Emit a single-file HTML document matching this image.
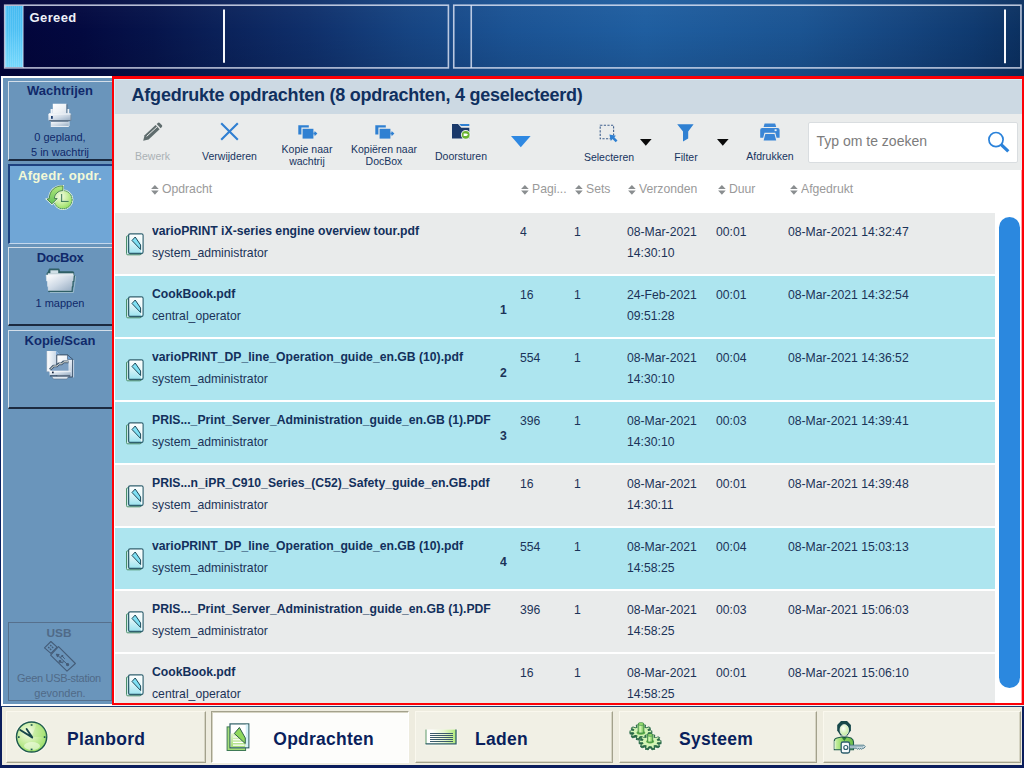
<!DOCTYPE html>
<html>
<head>
<meta charset="utf-8">
<style>
*{box-sizing:border-box;margin:0;padding:0}
html,body{width:1024px;height:768px;overflow:hidden}
body{position:relative;background:#02043a;font-family:"Liberation Sans",sans-serif;color:#0f2d5c}
.abs{position:absolute}
/* header */
#hdr{position:absolute;left:0;top:0;width:1024px;height:76px;background:linear-gradient(180deg,rgba(255,255,255,.03) 0%,rgba(0,0,0,0) 40%,rgba(0,0,20,.12) 100%),linear-gradient(90deg,#02043a 0%,#030940 8%,#06144b 15%,#0a2058 21%,#0f2f6a 30%,#164482 40%,#1b5394 50%,#1f5ea0 63%,#1b5492 78%,#15457f 88%,#0f3a70 95%,#0b3060 100%)}
#hdr .p{position:absolute;top:4px;height:65px;border:2px solid rgba(190,200,232,.78)}
#hdr .vd{position:absolute;top:10px;height:54px;width:2px;background:#f4f6fb}
#stripe{position:absolute;left:5px;top:6px;width:18px;height:61px;background:repeating-linear-gradient(90deg,rgba(255,255,255,.0) 0,rgba(255,255,255,0) 1px,rgba(255,255,255,.13) 1px,rgba(255,255,255,.13) 2px),linear-gradient(180deg,#45baf1 0%,#4cc0f4 40%,#74d8fc 100%)}
#gereed{position:absolute;left:29.5px;top:10px;font-weight:bold;font-size:13px;line-height:15px;color:#eef1f8;letter-spacing:.4px}
/* sidebar */
#side{position:absolute;left:1px;top:76px;width:111px;height:630px;background:#6a95bb;border-left:2px solid #fff;border-top:2px solid #fff;border-bottom:2px solid #fff}
.sb{position:absolute;left:5px;width:104px;height:80px;background:#6a95bb;border-top:1px solid #d3dee9;border-left:1px solid #d3dee9;border-bottom:2px solid #1b2a40;text-align:center;color:#10296a}
.sb.on{background:#70a6d6;border-top:2px solid #1d4180;border-left:2px solid #1d4180;border-bottom:1px solid #c4d8ee;color:#f3f9d6;height:80px}
.sb.dis{border:1px solid #56708d;color:#506a88;height:79px}
.sb .t{position:absolute;left:-2px;width:104px;font-weight:bold;font-size:13px;line-height:15px;white-space:nowrap}
.sb .s{position:absolute;left:-2px;width:104px;font-size:11px;line-height:13px;white-space:nowrap}
/* main */
#main{position:absolute;left:112px;top:76px;width:912px;box-shadow:inset -1px 0 0 rgba(253,0,6,.35);height:629px;background:#fff;border:2px solid #fd0006;border-top-width:3px;overflow:hidden}
#title{position:absolute;z-index:2;left:1px;top:2px;width:908px;height:35px;background:#ccd9e3;border-top:1px solid #d6eef6;border-left:1px solid #d6eef6}
#title span{position:absolute;left:16.6px;top:4.5px;font-size:18px;line-height:21px;font-weight:bold;color:#10305f;white-space:nowrap;letter-spacing:-.235px}
#tb{position:absolute;left:0;top:36px;width:910px;height:57px;background:#eaecec}
.tbl{position:absolute;font-size:10.5px;color:#17345f;text-align:center;line-height:12.5px;white-space:nowrap;transform:translateX(-50%)}
.ch{position:absolute;top:105px;font-size:13px;line-height:14px;color:#9a9a9a;white-space:nowrap;transform:scaleX(.938);transform-origin:0 50%}
.row{position:absolute;left:2px;width:880px;height:61px;background:#e9ebeb}
.row.sel{background:#ade5ef}
.row div{position:absolute;white-space:nowrap;font-size:13px;line-height:14px;color:#1b3358;transform:scaleX(.938);transform-origin:0 50%}
.row .n{left:37px;top:10.6px;font-weight:bold;color:#13305c}
.row .u{left:37px;top:32.7px}
.row .c1{margin-top:.5px;left:405px;top:11px}
.row .c2{margin-top:.5px;left:459px;top:11px}
.row .c3{margin-top:.5px;left:512px;top:11px}
.row .c3b{left:512px;top:32.7px}
.row .c4{margin-top:.5px;left:601px;top:11px}
.row .c5{margin-top:.5px;left:673px;top:11px}
.row .k{left:385px;top:27.4px;font-weight:bold}
.di{position:absolute;left:11px;top:20px;width:18px;height:23px}
#mi{position:absolute;left:-1px;top:-2px;width:910px;height:628px}
.sb>*{margin-left:1px}
.sb.on>*,.sb.dis>*{margin-left:0}
.sh>*{margin-top:.9px}
#tb>*{margin-top:.7px}
.ch,#mi>svg.hs{margin-top:0}
/* bottom */
#bot{position:absolute;left:0;top:706px;width:1024px;height:62px;background:#eeecdf;border-left:2px solid #0a1d5c;border-right:2px solid #0a1d5c;border-bottom:3px solid #0a1d5c;border-top:1px solid #1e3d70}
.bb{position:absolute;top:4px;height:52px;background:#f1f0e5;border-top:1px solid #faf8ee;border-left:1px solid #faf8ee;border-right:1px solid #a3a18c;border-bottom:1px solid #a3a18c;box-shadow:inset -1px -1px 0 #d6d4c3}
.bb.on{background:#fdfdfb;border-top:1px solid #a3a18c;border-left:1px solid #a3a18c;border-right:1px solid #fff;border-bottom:1px solid #fff;box-shadow:inset 1px 1px 0 #d6d4c3}
.bb span{position:absolute;top:16.5px;margin-left:-1px;letter-spacing:.3px;font-size:17.5px;line-height:21px;font-weight:bold;color:#0a1f5c;white-space:nowrap}
</style>
</head>
<body>
<div id="hdr">
  <div id="stripe"></div>
  <svg class="abs" style="left:0;top:0" width="1024" height="76" viewBox="0 0 1024 76"><g fill="none" stroke="#e3e9f8" stroke-opacity=".8" stroke-width="1.6"><rect x="4.7" y="5.2" width="443.7" height="62.7"/><rect x="453.75" y="5.2" width="567.2" height="62.7"/><path d="M471.25 5.2 V67.9"/><path d="M23.2 5.2 V67.9" stroke-opacity=".45"/></g><path d="M224 9.6 V62.8 M1005 9.6 V63.2" stroke="#f6f8fc" stroke-width="2" fill="none"/></svg>
  <div id="gereed">Gereed</div>
</div>
<div class="abs" style="left:0;top:76px;width:1px;height:630px;background:#0b2262"></div>
<div id="side">
  <div class="sb" style="top:3px;height:79.5px">
    <div class="t" style="top:1.4px">Wachtrijen</div>
    <svg class="abs hs" style="left:38px;top:21px" width="25" height="25" viewBox="0 0 25 25"><use href="#prn"/></svg>
    <div class="s" style="top:49px">0 gepland,</div>
    <div class="s" style="top:63.5px">5 in wachtrij</div>
  </div>
  <div class="sb on" style="top:85.5px">
    <div class="t" style="top:2px;font-size:13.2px;letter-spacing:.2px">Afgedr. opdr.</div>
    <svg class="abs hs" style="left:30px;top:14.5px" width="44" height="36" viewBox="0 0 44 36"><use href="#hist"/></svg>
  </div>
  <div class="sb sh" style="top:168.7px;height:79.8px">
    <div class="t" style="top:1px;letter-spacing:-.45px">DocBox</div>
    <svg class="abs hs" style="left:34.5px;top:19.0px" width="32" height="26" viewBox="0 0 32 26"><use href="#fold"/></svg>
    <div class="s" style="top:48.5px">1 mappen</div>
  </div>
  <div class="sb sh" style="top:251.7px;height:79px">
    <div class="t" style="top:1.3px">Kopie/Scan</div>
    <svg class="abs hs" style="left:36px;top:18.0px" width="29" height="30" viewBox="0 0 29 30"><use href="#scan"/></svg>
  </div>
  <div class="sb dis" style="top:544px">
    <div class="t" style="top:2.6px;left:-2px;font-size:11.8px">USB</div>
    <svg class="abs hs" style="left:34.5px;top:17.5px" width="32" height="31" viewBox="0 0 32 31"><use href="#usb"/></svg>
    <div class="s" style="top:49px;left:-2px;letter-spacing:-.3px">Geen USB-station</div>
    <div class="s" style="top:64px;left:-1px">gevonden.</div>
  </div>
</div>
<div id="main"><div id="mi">
  <svg width="0" height="0" style="position:absolute"><defs>
<g id="copy"><path d="M0.3 0.3 H10.8 V2.6 H3.4 V9.6 H0.3 Z" fill="#2f80d2"/><rect x="4.6" y="3.8" width="10.8" height="9.8" fill="#2f80d2"/><path d="M15.4 7.6 H16.6 V5.9 L19.4 8.6 L16.6 11.3 V9.6 H15.4 Z" fill="#2f80d2"/></g>
<linearGradient id="gD" x1="0" y1="0" x2="0" y2="1"><stop offset="0" stop-color="#ffffff"/><stop offset=".35" stop-color="#e6f7f9"/><stop offset="1" stop-color="#9be3f0"/></linearGradient>
<g id="doc"><rect x="0.5" y="2.8" width="14.6" height="19" rx="1.2" fill="#cfeaee" stroke="#4a8f6a" stroke-width="1"/><rect x="2.6" y="0.8" width="14.4" height="19.7" rx="1.5" fill="url(#gD)" stroke="#2f5f6e" stroke-width="1.3"/><rect x="14.7" y="1.8" width="1.6" height="17.6" fill="#f6fcfc"/><path d="M9.2 4 L6 7.5 L14.6 16.5 L14.6 12 Z" fill="#7fe0f4" stroke="#1f4a5a" stroke-width="1" stroke-linejoin="round"/></g>

<linearGradient id="gW" x1="0" y1="0" x2="1" y2="1"><stop offset="0" stop-color="#ffffff"/><stop offset=".55" stop-color="#e6edf5"/><stop offset="1" stop-color="#a9bdd3"/></linearGradient>
<linearGradient id="gH" x1="0" y1="0" x2="1" y2="0"><stop offset="0" stop-color="#ffffff"/><stop offset=".5" stop-color="#dbe5ef"/><stop offset="1" stop-color="#b4c6da"/></linearGradient>
<radialGradient id="gG" cx=".38" cy=".32" r=".75"><stop offset="0" stop-color="#f4fde4"/><stop offset=".5" stop-color="#c9efa0"/><stop offset="1" stop-color="#8fdc58"/></radialGradient>
<linearGradient id="gA" x1="0" y1="0" x2="0" y2="1"><stop offset="0" stop-color="#b6ea7c"/><stop offset="1" stop-color="#62c25a"/></linearGradient>
<linearGradient id="gP" x1="0" y1="0" x2="1" y2="1"><stop offset="0" stop-color="#ffffff"/><stop offset=".6" stop-color="#eef2f6"/><stop offset="1" stop-color="#dbe3ec"/></linearGradient><linearGradient id="gB" x1="0" y1="0" x2="1" y2="1"><stop offset="0" stop-color="#ffffff"/><stop offset=".5" stop-color="#cfdae6"/><stop offset="1" stop-color="#93a9c0"/></linearGradient><g id="prn"><rect x="4.8" y="0.75" width="13.7" height="9.8" fill="url(#gP)"/><rect x="18.5" y="1.3" width="1" height="9.2" fill="#566c82"/><rect x="2.6" y="6" width="2.2" height="4.6" fill="#eef2f7"/><rect x="19.5" y="6" width="1.7" height="4.6" fill="#eef2f7"/><rect x="0.4" y="10.4" width="22.7" height="7.4" rx="1.1" fill="url(#gB)"/><path d="M1 10.9 H22.4" stroke="#fff" stroke-width=".9"/><path d="M1.2 17.5 H22.6" stroke="#5f7389" stroke-width="1"/><path d="M22.9 11.6 V17.6" stroke="#6b8096" stroke-width=".8"/><rect x="3" y="13" width="1.8" height="2.8" fill="#1f3f70"/><path d="M2.8 18.2 H20.8 V23.2 H2.8 Z" fill="url(#gB)"/><path d="M2.8 18.5 H20.8" stroke="#6b7f95" stroke-width=".9"/><path d="M2.8 23.4 H20.8" stroke="#f4f7fa" stroke-width="1"/><path d="M21.1 18.4 V23" stroke="#e6edf4" stroke-width=".8"/></g>
<g id="hist"><circle cx="23" cy="19.7" r="9.9" fill="none" stroke="#e9f6de" stroke-width="1"/><circle cx="23" cy="19.7" r="9.1" fill="url(#gG)" stroke="#3f8148" stroke-width=".9" stroke-dasharray="1.3 .7"/><path d="M21.6 14 V21.3 H28.6" stroke="#3f7a58" stroke-width="1.3" fill="none"/><path d="M22.2 14 V20.6 H28.6" stroke="#e8f8d4" stroke-width=".6" fill="none" opacity=".8"/><path d="M23 5.9 C15 5.6 9.6 10.5 9.2 18.6 L7 19.2 L12 23.8 L17.2 18.6 L14.4 18.4 C14.8 14 18 10.8 22.8 10.6 Z" fill="#eaf7e0" stroke="#eaf7e0" stroke-width="2"/><path d="M23 5.9 C15 5.6 9.6 10.5 9.2 18.6 L7 19.2 L12 23.8 L17.2 18.6 L14.4 18.4 C14.8 14 18 10.8 22.8 10.6 Z" fill="url(#gA)" stroke="#2f6b3a" stroke-width=".8"/></g>
<g id="fold"><path d="M4.6 0.6 H13.6 Q14.4 0.6 14.6 1.4 L15 3.2 H27.6 Q29.2 3.2 29.2 4.8 V8 H1.6 V5.4 Q1.6 4.6 2.6 4.2 L3.8 1.2 Q4 0.6 4.6 0.6Z" fill="#2f5f66"/><rect x="5.4" y="2.3" width="7.8" height="3.2" fill="#cfdfe6"/><rect x="2.8" y="5.3" width="25.6" height="2.2" fill="#dfe8ee"/><path d="M1.2 7.1 H28.9 L28.4 13 L27.6 13.2 L27.4 18.4 L26.8 18.6 L26.6 22.8 H3.4 L3.2 18.6 L2.6 18.4 L2.4 13.2 L1.6 13 Z" fill="url(#gB)" stroke="#e9f0f4" stroke-width=".5"/><path d="M29.4 7.4 L28.9 13.3 L28.1 13.5 L27.9 18.7 L27.3 18.9 L27.1 23.4 H3.2" fill="none" stroke="#2f5f66" stroke-width="1.3"/><path d="M30.5 8 L30 13.8 L29.2 19.4 L28.4 24.5 H5" fill="none" stroke="#bcd6d4" stroke-width=".7" opacity=".8"/></g>
<g id="scan"><path d="M0.7 1 H10 L14 4.8 V21.8 H0.7 Z" fill="url(#gH)"/><path d="M10 1 L14 4.8 H10 Z" fill="#7fa9d6"/><path d="M0.7 1 V21.8 H4" stroke="#7f96ae" stroke-width=".6" fill="none"/><path d="M10.75 4.9 H21.5 L26.7 9.4 V27 H10.75 Z" fill="url(#gW)" stroke="#3a4f66" stroke-width="1"/><path d="M21.5 4.9 L26.7 9.4 H21.5 Z" fill="#6fa3d8" stroke="#3a4f66" stroke-width=".6"/><path d="M27.6 10 V27.4" stroke="#dfe9f2" stroke-width=".8"/><path d="M4 21 L7.6 17 H10.6 L12.8 14.8 H15.6 L17.6 12.8 H22.5 V21 Z" fill="#7d9fc2"/><path d="M4 19.6 L7.6 16 H10.6 L12.8 13.8 H15.6 L17.6 11.8 H22.5" stroke="#3f566e" stroke-width="2.7" fill="none" stroke-linejoin="round"/><path d="M4.4 19.2 L7.8 16 H10.8 L13 13.8 H15.8 L17.8 11.8 H22" stroke="#e9e8dd" stroke-width="1" fill="none"/><rect x="3.5" y="20.9" width="21.3" height="4.5" fill="url(#gB)"/><path d="M3.5 21.2 H24.8" stroke="#fff" stroke-width=".7"/><rect x="6" y="21.6" width="1.7" height="1.7" fill="#14223c"/><path d="M4 25.9 H24.2" stroke="#2f4258" stroke-width="1.1"/><path d="M5.6 26.5 H22.5 L21 29 H7.4 Z" fill="#dfe7ef" stroke="#5a6f86" stroke-width=".6"/></g>
<g id="usb" fill="none" stroke="#445c78" stroke-width="1.1" stroke-linejoin="round"><path d="M6.9 0.5 L0.5 6.9 L6.9 12.3 L13.1 6.1 Z"/><path d="M6.2 4 L7.4 5.2 M8 5.8 L9.2 7 M4.2 6 L5.4 7.2 M6 7.8 L7.2 9" stroke-width="1.3"/><path d="M14.5 5.6 L6.6 14.1 L23 30.1 L31.4 22.5 Z"/><path d="M13.8 14.4 L23.5 23.5 M16 16.4 L18.4 15.4 L20.8 17.8 M19.4 19.8 L18.6 22 L16 20.6" stroke-width="1"/><path d="M12.4 13.2 L15 13.6 L13.4 15.6 Z" fill="#445c78"/><circle cx="23.6" cy="23.6" r="1.1" fill="#445c78"/><circle cx="16" cy="20.4" r=".9" fill="#445c78"/><rect x="17.4" y="14" width="1.8" height="1.8" fill="#445c78" stroke="none"/></g>
<radialGradient id="gC" cx=".4" cy=".35" r=".8"><stop offset="0" stop-color="#f6fdea"/><stop offset=".45" stop-color="#c7eda0"/><stop offset="1" stop-color="#86d850"/></radialGradient>
<g id="clock"><circle cx="16.6" cy="17" r="16.2" fill="none" stroke="#fbf9ef" stroke-width="1.2"/><circle cx="16.6" cy="17" r="15.1" fill="url(#gC)" stroke="#1f5a50" stroke-width="1.5"/><path d="M16.6 17 L31.6 17 A15 15 0 0 0 22 3 Z" fill="#9be068" opacity=".32"/><ellipse cx="17" cy="26" rx="8" ry="4" fill="#f4fde8" opacity=".6"/><path d="M5.2 10 L17.2 17.4 M11.6 9 L17.2 17.4" stroke="#17474a" stroke-width="1.9" stroke-linecap="round" fill="none"/><g fill="#1f5a50"><rect x="15.7" y="4.2" width="1.8" height="1.6"/><rect x="15.7" y="28.6" width="1.8" height="1.6"/><rect x="3" y="16.2" width="1.6" height="1.8"/><rect x="28.8" y="16.2" width="1.6" height="1.8"/></g></g><linearGradient id="gJ" x1="0" y1="0" x2="1" y2="1"><stop offset="0" stop-color="#a6dd85"/><stop offset="1" stop-color="#7cc660"/></linearGradient>
<linearGradient id="gJ2" x1="0" y1="0" x2="0" y2="1"><stop offset="0" stop-color="#e2f6cc"/><stop offset="1" stop-color="#a4dc76"/></linearGradient><g id="jobs"><rect x="1.1" y="3.9" width="18.5" height="23.6" fill="#a5dd78" stroke="#3f7a55" stroke-width="1"/><rect x="4" y="0.9" width="18.8" height="23.9" fill="#fff" stroke="#2f5f66" stroke-width="1.2"/><rect x="19.7" y="1.6" width="2.5" height="22.5" fill="#d4f0f8"/><path d="M4.7 10.5 H8.3 L19.3 20.6 V24.1 H4.7 Z" fill="url(#gJ2)"/><path d="M7 14 H12 M7 16.7 H15 M7 19.4 H17.6 M7 22.1 H18.6" stroke="#fff" stroke-width="1.1"/><path d="M13.4 4.5 L8.3 10.5 L19.3 20.6 L19.3 15 Z" fill="#8fd85c" stroke="#2f5f4a" stroke-width="1" stroke-linejoin="round"/></g>
<linearGradient id="gT" x1="0" y1="0" x2="1" y2="0"><stop offset="0" stop-color="#ffffff"/><stop offset=".2" stop-color="#ffffff"/><stop offset=".6" stop-color="#e4f6cf"/><stop offset="1" stop-color="#b0ea78"/></linearGradient><g id="tray"><rect x="-0.2" y="-0.2" width="32.4" height="16.2" fill="none" stroke="#fbf9ef" stroke-width="1"/><rect x="1" y="0.6" width="30" height="14" fill="url(#gT)"/><path d="M1 0.5 V15" stroke="#5f9a6a" stroke-width="1"/><path d="M0.6 14.8 H31 V0.5" fill="none" stroke="#2f5f6a" stroke-width="1.3"/><path d="M4.6 4 H27.5 M4.6 6 H27.5 M4.6 8 H27.5 M4.6 10 H27.5 M4.6 12 H27.5" stroke="#3a5a6c" stroke-width="1" shape-rendering="crispEdges"/></g>
<g id="gear1"><path d="M8.9 -1.1 L8.9 1.1 L6.3 1.3 L5.8 2.6 L7.9 4.4 L6.6 6.1 L4.3 4.8 L3.2 5.5 L3.8 8.2 L1.7 8.8 L0.7 6.4 L-0.7 6.4 L-1.7 8.8 L-3.8 8.2 L-3.2 5.5 L-4.3 4.8 L-6.6 6.1 L-7.9 4.4 L-5.8 2.6 L-6.3 1.3 L-8.9 1.1 L-8.9 -1.1 L-6.3 -1.3 L-5.8 -2.6 L-7.9 -4.4 L-6.6 -6.1 L-4.3 -4.8 L-3.2 -5.5 L-3.8 -8.2 L-1.7 -8.8 L-0.7 -6.4 L0.7 -6.4 L1.7 -8.8 L3.8 -8.2 L3.2 -5.5 L4.3 -4.8 L6.6 -6.1 L7.9 -4.4 L5.8 -2.6 L6.3 -1.3 Z" fill="#d4f4b6" stroke="#2a6a48" stroke-width=".9" stroke-linejoin="round"/></g><g id="gear1d"><path d="M8.9 -1.1 L8.9 1.1 L6.3 1.3 L5.8 2.6 L7.9 4.4 L6.6 6.1 L4.3 4.8 L3.2 5.5 L3.8 8.2 L1.7 8.8 L0.7 6.4 L-0.7 6.4 L-1.7 8.8 L-3.8 8.2 L-3.2 5.5 L-4.3 4.8 L-6.6 6.1 L-7.9 4.4 L-5.8 2.6 L-6.3 1.3 L-8.9 1.1 L-8.9 -1.1 L-6.3 -1.3 L-5.8 -2.6 L-7.9 -4.4 L-6.6 -6.1 L-4.3 -4.8 L-3.2 -5.5 L-3.8 -8.2 L-1.7 -8.8 L-0.7 -6.4 L0.7 -6.4 L1.7 -8.8 L3.8 -8.2 L3.2 -5.5 L4.3 -4.8 L6.6 -6.1 L7.9 -4.4 L5.8 -2.6 L6.3 -1.3 Z" fill="#2a6a48" stroke="#2a6a48" stroke-width=".9" stroke-linejoin="round"/></g><g id="gear1g"><path d="M8.9 -1.1 L8.9 1.1 L6.3 1.3 L5.8 2.6 L7.9 4.4 L6.6 6.1 L4.3 4.8 L3.2 5.5 L3.8 8.2 L1.7 8.8 L0.7 6.4 L-0.7 6.4 L-1.7 8.8 L-3.8 8.2 L-3.2 5.5 L-4.3 4.8 L-6.6 6.1 L-7.9 4.4 L-5.8 2.6 L-6.3 1.3 L-8.9 1.1 L-8.9 -1.1 L-6.3 -1.3 L-5.8 -2.6 L-7.9 -4.4 L-6.6 -6.1 L-4.3 -4.8 L-3.2 -5.5 L-3.8 -8.2 L-1.7 -8.8 L-0.7 -6.4 L0.7 -6.4 L1.7 -8.8 L3.8 -8.2 L3.2 -5.5 L4.3 -4.8 L6.6 -6.1 L7.9 -4.4 L5.8 -2.6 L6.3 -1.3 Z" fill="none" stroke="#fbfaf0" stroke-width="2.6" stroke-linejoin="round"/></g>
<linearGradient id="gCy" x1="0" y1="0" x2="1" y2="0"><stop offset="0" stop-color="#7ccc58"/><stop offset=".35" stop-color="#d8f7b8"/><stop offset="1" stop-color="#6cc04c"/></linearGradient><g id="gears"><g transform="translate(11.9 11.2) scale(1.22 .78)"><use href="#gear1g"/></g><g transform="translate(21.1 21.1) scale(1.22 .78)"><use href="#gear1g"/></g><g transform="translate(11.9 11.2) scale(1.22 .78)"><use href="#gear1d"/></g><g transform="translate(11.9 9.6) scale(1.22 .78)"><use href="#gear1"/></g><ellipse cx="11.9" cy="10.8" rx="4.4" ry="1.9" fill="#5fb04a"/><rect x="9.1" y="1.6" width="5.8" height="9.4" rx="1" fill="url(#gCy)" stroke="#2f7a44" stroke-width=".7"/><ellipse cx="12" cy="2" rx="2.9" ry="1.4" fill="#9ee070" stroke="#2f7a44" stroke-width=".6"/><g transform="translate(21.1 21.1) scale(1.22 .78)"><use href="#gear1d"/></g><g transform="translate(21.1 19.5) scale(1.22 .78)"><use href="#gear1"/></g><ellipse cx="21.1" cy="19.6" rx="4" ry="1.8" fill="#5fb04a"/><rect x="18.5" y="12.6" width="5.2" height="7.4" rx="1" fill="url(#gCy)" stroke="#2f7a44" stroke-width=".7"/><ellipse cx="21.1" cy="13" rx="2.6" ry="1.3" fill="#9ee070" stroke="#2f7a44" stroke-width=".6"/></g><linearGradient id="gU" x1="0" y1="0" x2="1" y2="0"><stop offset="0" stop-color="#b6e39a"/><stop offset="1" stop-color="#6fbf58"/></linearGradient>
<radialGradient id="gF" cx=".4" cy=".35" r=".7"><stop offset="0" stop-color="#ffffff"/><stop offset="1" stop-color="#bdeb94"/></radialGradient><linearGradient id="gU2" x1="0" y1="0" x2="1" y2="0"><stop offset="0" stop-color="#d2f3b4"/><stop offset=".4" stop-color="#93da62"/><stop offset="1" stop-color="#6cbc4a"/></linearGradient><g id="user"><path d="M1.3 29.8 V21 Q1.3 18.6 4 18 L8.5 17 H14 L18 18 Q20.5 19.4 20.5 22 V29.8 Z" fill="url(#gU2)" stroke="#1f5a4a" stroke-width="1.1"/><path d="M1.9 29 V21" stroke="#f2fbea" stroke-width=".9"/><path d="M8.4 17 L11.3 21 L14.2 17 Z" fill="#2f7a3a"/><path d="M8 0.9 H14 L17.9 5 V10.5 L14.5 15.4 H7.5 L4.2 10.5 V5 Z" fill="#17484a"/><ellipse cx="11.3" cy="10" rx="4.3" ry="5.5" fill="url(#gF)" stroke="#f4fbf0" stroke-width=".7"/><path d="M8 16.6 L11.3 18 L14.6 16.6 L11.3 17 Z" fill="#17484a"/><rect x="8.2" y="22" width="8.4" height="11" rx="1.8" fill="#f6f9fb" stroke="#2f5f6e" stroke-width="1.3"/><circle cx="12.8" cy="27.5" r="2" fill="#fff" stroke="#2f5f6e" stroke-width="1.2"/><path d="M16.6 25.2 H31 L32.2 26.6 L31 28.2 H29.5 L28.6 29.4 L27.6 28.2 L26.6 29.4 L25.6 28.2 L24.6 29.4 L23.6 28.2 H16.6 Z" fill="#eef4f7" stroke="#3f6f80" stroke-width=".9"/><path d="M17.2 26.8 H30.4" stroke="#5f8a98" stroke-width=".8"/></g>
</defs></svg>
  <div id="title"><span>Afgedrukte opdrachten (8 opdrachten, 4 geselecteerd)</span></div>
  <div id="tb">
    <!-- pencil -->
    <svg class="abs hs" style="left:29px;top:8px" width="21" height="20" viewBox="0 0 21 20"><g fill="#5f6c6d"><path d="M1.2 18.8 L2.6 13.2 L13.6 3.1 L17.6 7.3 L6.6 17.4 Z"/><path d="M14.7 2.1 L16.2 0.8 Q17 0.2 17.8 1 L20 3.3 Q20.6 4.1 19.9 4.9 L18.6 6.2 Z"/></g><path d="M4.6 14.4 L15 4.9" stroke="#eaecec" stroke-width="1" fill="none"/></svg>
    <div class="tbl" style="left:39.5px;top:36.5px;color:#aab1b5">Bewerk</div>
    <!-- X -->
    <svg class="abs hs" style="left:107px;top:8.5px" width="19" height="19" viewBox="0 0 19 19"><path d="M1.2 1.2 L17.8 17.8 M17.8 1.2 L1.2 17.8" stroke="#2f7fd2" stroke-width="2.1" fill="none"/></svg>
    <div class="tbl" style="left:116.5px;top:36.5px">Verwijderen</div>
    <!-- copy 1 -->
    <svg class="abs hs" style="left:184.5px;top:11.5px" width="20" height="14" viewBox="0 0 20 14"><use href="#copy"/></svg>
    <div class="tbl" style="left:194px;top:29px">Kopie naar<br>wachtrij</div>
    <!-- copy 2 -->
    <svg class="abs hs" style="left:261.5px;top:11.5px" width="20" height="14" viewBox="0 0 20 14"><use href="#copy"/></svg>
    <div class="tbl" style="left:271px;top:29px">Kopiëren naar<br>DocBox</div>
    <!-- forward -->
    <svg class="abs hs" style="left:339px;top:10.5px" width="20" height="17" viewBox="0 0 20 17"><path d="M0 0.1 H6 L9.3 3.8 H17.3 V14.6 H0 Z" fill="#1a396a"/><path d="M7.2 0 H17.3 V2.1 H9 Z" fill="#2f80d2"/><circle cx="13.7" cy="10.8" r="4.8" fill="#f2f5f5"/><circle cx="13.7" cy="10.8" r="3.9" fill="#6ab432"/><path d="M11.6 9.5 H14.3 L16.2 10.8 L14.3 12.1 H11.6 Z" fill="#fff"/></svg>
    <div class="tbl" style="left:348px;top:36.8px">Doorsturen</div>
    <!-- blue tri -->
    <svg class="abs hs" style="left:398px;top:22.5px" width="20" height="12" viewBox="0 0 20 12"><path d="M0 0 H19.6 L9.8 11.2 Z" fill="#2e88e2"/></svg>
    <!-- select -->
    <svg class="abs hs" style="left:486px;top:10px" width="20" height="19" viewBox="0 0 20 19"><rect x="1.2" y="1.2" width="13.4" height="13.6" fill="none" stroke="#40608e" stroke-width="1.1" stroke-dasharray="2.2 1.4"/><path d="M10.4 10.4 L17 11.7 L15.3 13.3 L18.5 16.5 L16.7 18.3 L13.5 15.1 L11.8 16.9 Z" fill="#2f80d2"/></svg>
    <div class="tbl" style="left:496px;top:37.5px">Selecteren</div>
    <svg class="abs hs" style="left:527.3px;top:25.2px" width="12" height="8" viewBox="0 0 12 8"><path d="M0 0 H11.6 L5.8 6.8 Z" fill="#0a0a0a"/></svg>
    <!-- filter -->
    <svg class="abs hs" style="left:564px;top:10px" width="17" height="18" viewBox="0 0 17 18"><path d="M0.2 0.2 H16.6 L11.2 7.4 V14.4 L6 17.6 V7.4 Z" fill="#2f80d2"/></svg>
    <div class="tbl" style="left:573px;top:37.5px">Filter</div>
    <svg class="abs hs" style="left:604px;top:25.2px" width="12" height="8" viewBox="0 0 12 8"><path d="M0 0 H11.6 L5.8 6.8 Z" fill="#0a0a0a"/></svg>
    <!-- print -->
    <svg class="abs hs" style="left:647px;top:9px" width="20" height="18" viewBox="0 0 20 18"><g fill="#3a86d6"><path d="M4.6 0.4 H15.2 L16.2 4 H3.6 Z"/><path d="M2.2 4.9 H17.6 Q19.6 4.9 19.6 7 V14.8 H16.6 L15.3 9.8 H4.5 L3.2 14.8 H0.2 V7 Q0.2 4.9 2.2 4.9 Z"/><path d="M5.3 10.9 H14.5 L16.2 17.6 H3.6 Z"/></g><rect x="14.6" y="6.3" width="2" height="1.8" fill="#eaf2fb"/></svg>
    <div class="tbl" style="left:657px;top:36.5px">Afdrukken</div>
    <!-- search -->
    <div class="abs" style="left:695px;top:8px;width:210px;height:41px;background:#fff;border:1px solid #d9dde0;border-radius:2px"></div>
    <div class="abs" style="left:703.5px;top:19.5px;font-size:14px;color:#7c7c7c;white-space:nowrap">Typ om te zoeken</div>
    <svg class="abs hs" style="left:874px;top:17.5px" width="24" height="24" viewBox="0 0 24 24"><circle cx="9" cy="8.6" r="7.1" fill="none" stroke="#2a82da" stroke-width="1.7"/><path d="M14.2 13.6 L21.3 20.4" stroke="#2a82da" stroke-width="3.2" fill="none"/></svg>
  </div>

  <svg class="abs hs" style="left:38px;top:107.5px" width="8" height="10" viewBox="0 0 8 10" overflow="visible"><path d="M0.1 4.1 L3.9 -0.1 L7.7 4.1 Z M0.1 5.5 H7.7 L3.9 9.7 Z" fill="#8a8e90"/></svg><div class="ch" style="left:49px">Opdracht</div>
  <svg class="abs hs" style="left:408px;top:107.5px" width="8" height="10" viewBox="0 0 8 10" overflow="visible"><path d="M0.1 4.1 L3.9 -0.1 L7.7 4.1 Z M0.1 5.5 H7.7 L3.9 9.7 Z" fill="#8a8e90"/></svg><div class="ch" style="left:419px">Pagi...</div>
  <svg class="abs hs" style="left:462px;top:107.5px" width="8" height="10" viewBox="0 0 8 10" overflow="visible"><path d="M0.1 4.1 L3.9 -0.1 L7.7 4.1 Z M0.1 5.5 H7.7 L3.9 9.7 Z" fill="#8a8e90"/></svg><div class="ch" style="left:473px">Sets</div>
  <svg class="abs hs" style="left:515px;top:107.5px" width="8" height="10" viewBox="0 0 8 10" overflow="visible"><path d="M0.1 4.1 L3.9 -0.1 L7.7 4.1 Z M0.1 5.5 H7.7 L3.9 9.7 Z" fill="#8a8e90"/></svg><div class="ch" style="left:526px">Verzonden</div>
  <svg class="abs hs" style="left:605px;top:107.5px" width="8" height="10" viewBox="0 0 8 10" overflow="visible"><path d="M0.1 4.1 L3.9 -0.1 L7.7 4.1 Z M0.1 5.5 H7.7 L3.9 9.7 Z" fill="#8a8e90"/></svg><div class="ch" style="left:616px">Duur</div>
  <svg class="abs hs" style="left:677px;top:107.5px" width="8" height="10" viewBox="0 0 8 10" overflow="visible"><path d="M0.1 4.1 L3.9 -0.1 L7.7 4.1 Z M0.1 5.5 H7.7 L3.9 9.7 Z" fill="#8a8e90"/></svg><div class="ch" style="left:688px">Afgedrukt</div>
<div class="row" style="top:136px"><svg class="di" viewBox="0 0 18 23"><use href="#doc"/></svg><div class="n">varioPRINT iX-series engine overview tour.pdf</div><div class="u">system_administrator</div><div class="c1">4</div><div class="c2">1</div><div class="c3">08-Mar-2021</div><div class="c3b">14:30:10</div><div class="c4">00:01</div><div class="c5">08-Mar-2021 14:32:47</div></div>
<div class="row sel" style="top:199px"><svg class="di" viewBox="0 0 18 23"><use href="#doc"/></svg><div class="n">CookBook.pdf</div><div class="u">central_operator</div><div class="k">1</div><div class="c1">16</div><div class="c2">1</div><div class="c3">24-Feb-2021</div><div class="c3b">09:51:28</div><div class="c4">00:01</div><div class="c5">08-Mar-2021 14:32:54</div></div>
<div class="row sel" style="top:262px"><svg class="di" viewBox="0 0 18 23"><use href="#doc"/></svg><div class="n">varioPRINT_DP_line_Operation_guide_en.GB (10).pdf</div><div class="u">system_administrator</div><div class="k">2</div><div class="c1">554</div><div class="c2">1</div><div class="c3">08-Mar-2021</div><div class="c3b">14:30:10</div><div class="c4">00:04</div><div class="c5">08-Mar-2021 14:36:52</div></div>
<div class="row sel" style="top:325px"><svg class="di" viewBox="0 0 18 23"><use href="#doc"/></svg><div class="n">PRIS..._Print_Server_Administration_guide_en.GB (1).PDF</div><div class="u">system_administrator</div><div class="k">3</div><div class="c1">396</div><div class="c2">1</div><div class="c3">08-Mar-2021</div><div class="c3b">14:30:10</div><div class="c4">00:03</div><div class="c5">08-Mar-2021 14:39:41</div></div>
<div class="row" style="top:388px"><svg class="di" viewBox="0 0 18 23"><use href="#doc"/></svg><div class="n">PRIS...n_iPR_C910_Series_(C52)_Safety_guide_en.GB.pdf</div><div class="u">system_administrator</div><div class="c1">16</div><div class="c2">1</div><div class="c3">08-Mar-2021</div><div class="c3b">14:30:11</div><div class="c4">00:01</div><div class="c5">08-Mar-2021 14:39:48</div></div>
<div class="row sel" style="top:451px"><svg class="di" viewBox="0 0 18 23"><use href="#doc"/></svg><div class="n">varioPRINT_DP_line_Operation_guide_en.GB (10).pdf</div><div class="u">system_administrator</div><div class="k">4</div><div class="c1">554</div><div class="c2">1</div><div class="c3">08-Mar-2021</div><div class="c3b">14:58:25</div><div class="c4">00:04</div><div class="c5">08-Mar-2021 15:03:13</div></div>
<div class="row" style="top:514px"><svg class="di" viewBox="0 0 18 23"><use href="#doc"/></svg><div class="n">PRIS..._Print_Server_Administration_guide_en.GB (1).PDF</div><div class="u">system_administrator</div><div class="c1">396</div><div class="c2">1</div><div class="c3">08-Mar-2021</div><div class="c3b">14:58:25</div><div class="c4">00:03</div><div class="c5">08-Mar-2021 15:06:03</div></div>
<div class="row" style="top:577px"><svg class="di" viewBox="0 0 18 23"><use href="#doc"/></svg><div class="n">CookBook.pdf</div><div class="u">central_operator</div><div class="c1">16</div><div class="c2">1</div><div class="c3">08-Mar-2021</div><div class="c3b">14:58:25</div><div class="c4">00:01</div><div class="c5">08-Mar-2021 15:06:10</div></div>

  <div class="abs" style="left:886px;top:139.5px;width:21px;height:471.5px;border-radius:10.5px;background:#2b88df"></div>
</div></div>
<div class="abs" style="left:112px;top:705px;width:912px;height:1px;background:#eef2f6"></div>
<div id="bot">
  <div class="bb" style="left:4px;width:200px"><svg class="abs hs" style="left:7.8px;top:8px" width="34" height="34" viewBox="0 0 34 34"><use href="#clock"/></svg><span style="left:61px">Planbord</span></div>
  <div class="bb on" style="left:209px;width:198px"><svg class="abs hs" style="left:14px;top:11.4px" width="24" height="29" viewBox="0 0 24 29"><use href="#jobs"/></svg><span style="left:62.3px;top:17.3px;letter-spacing:.25px">Opdrachten</span></div>
  <div class="bb" style="left:413px;width:198px"><svg class="abs hs" style="left:8.5px;top:16.5px" width="33" height="17" viewBox="0 0 33 17"><use href="#tray"/></svg><span style="left:60px">Laden</span></div>
  <div class="bb" style="left:617px;width:198px"><svg class="abs hs" style="left:9px;top:10px" width="34" height="30" viewBox="0 0 34 30"><use href="#gears"/></svg><span style="left:60px">Systeem</span></div>
  <div class="bb" style="left:821px;width:198px"><svg class="abs hs" style="left:9px;top:8px" width="34" height="34" viewBox="0 0 34 34"><use href="#user"/></svg></div>
</div>
</body>
</html>
